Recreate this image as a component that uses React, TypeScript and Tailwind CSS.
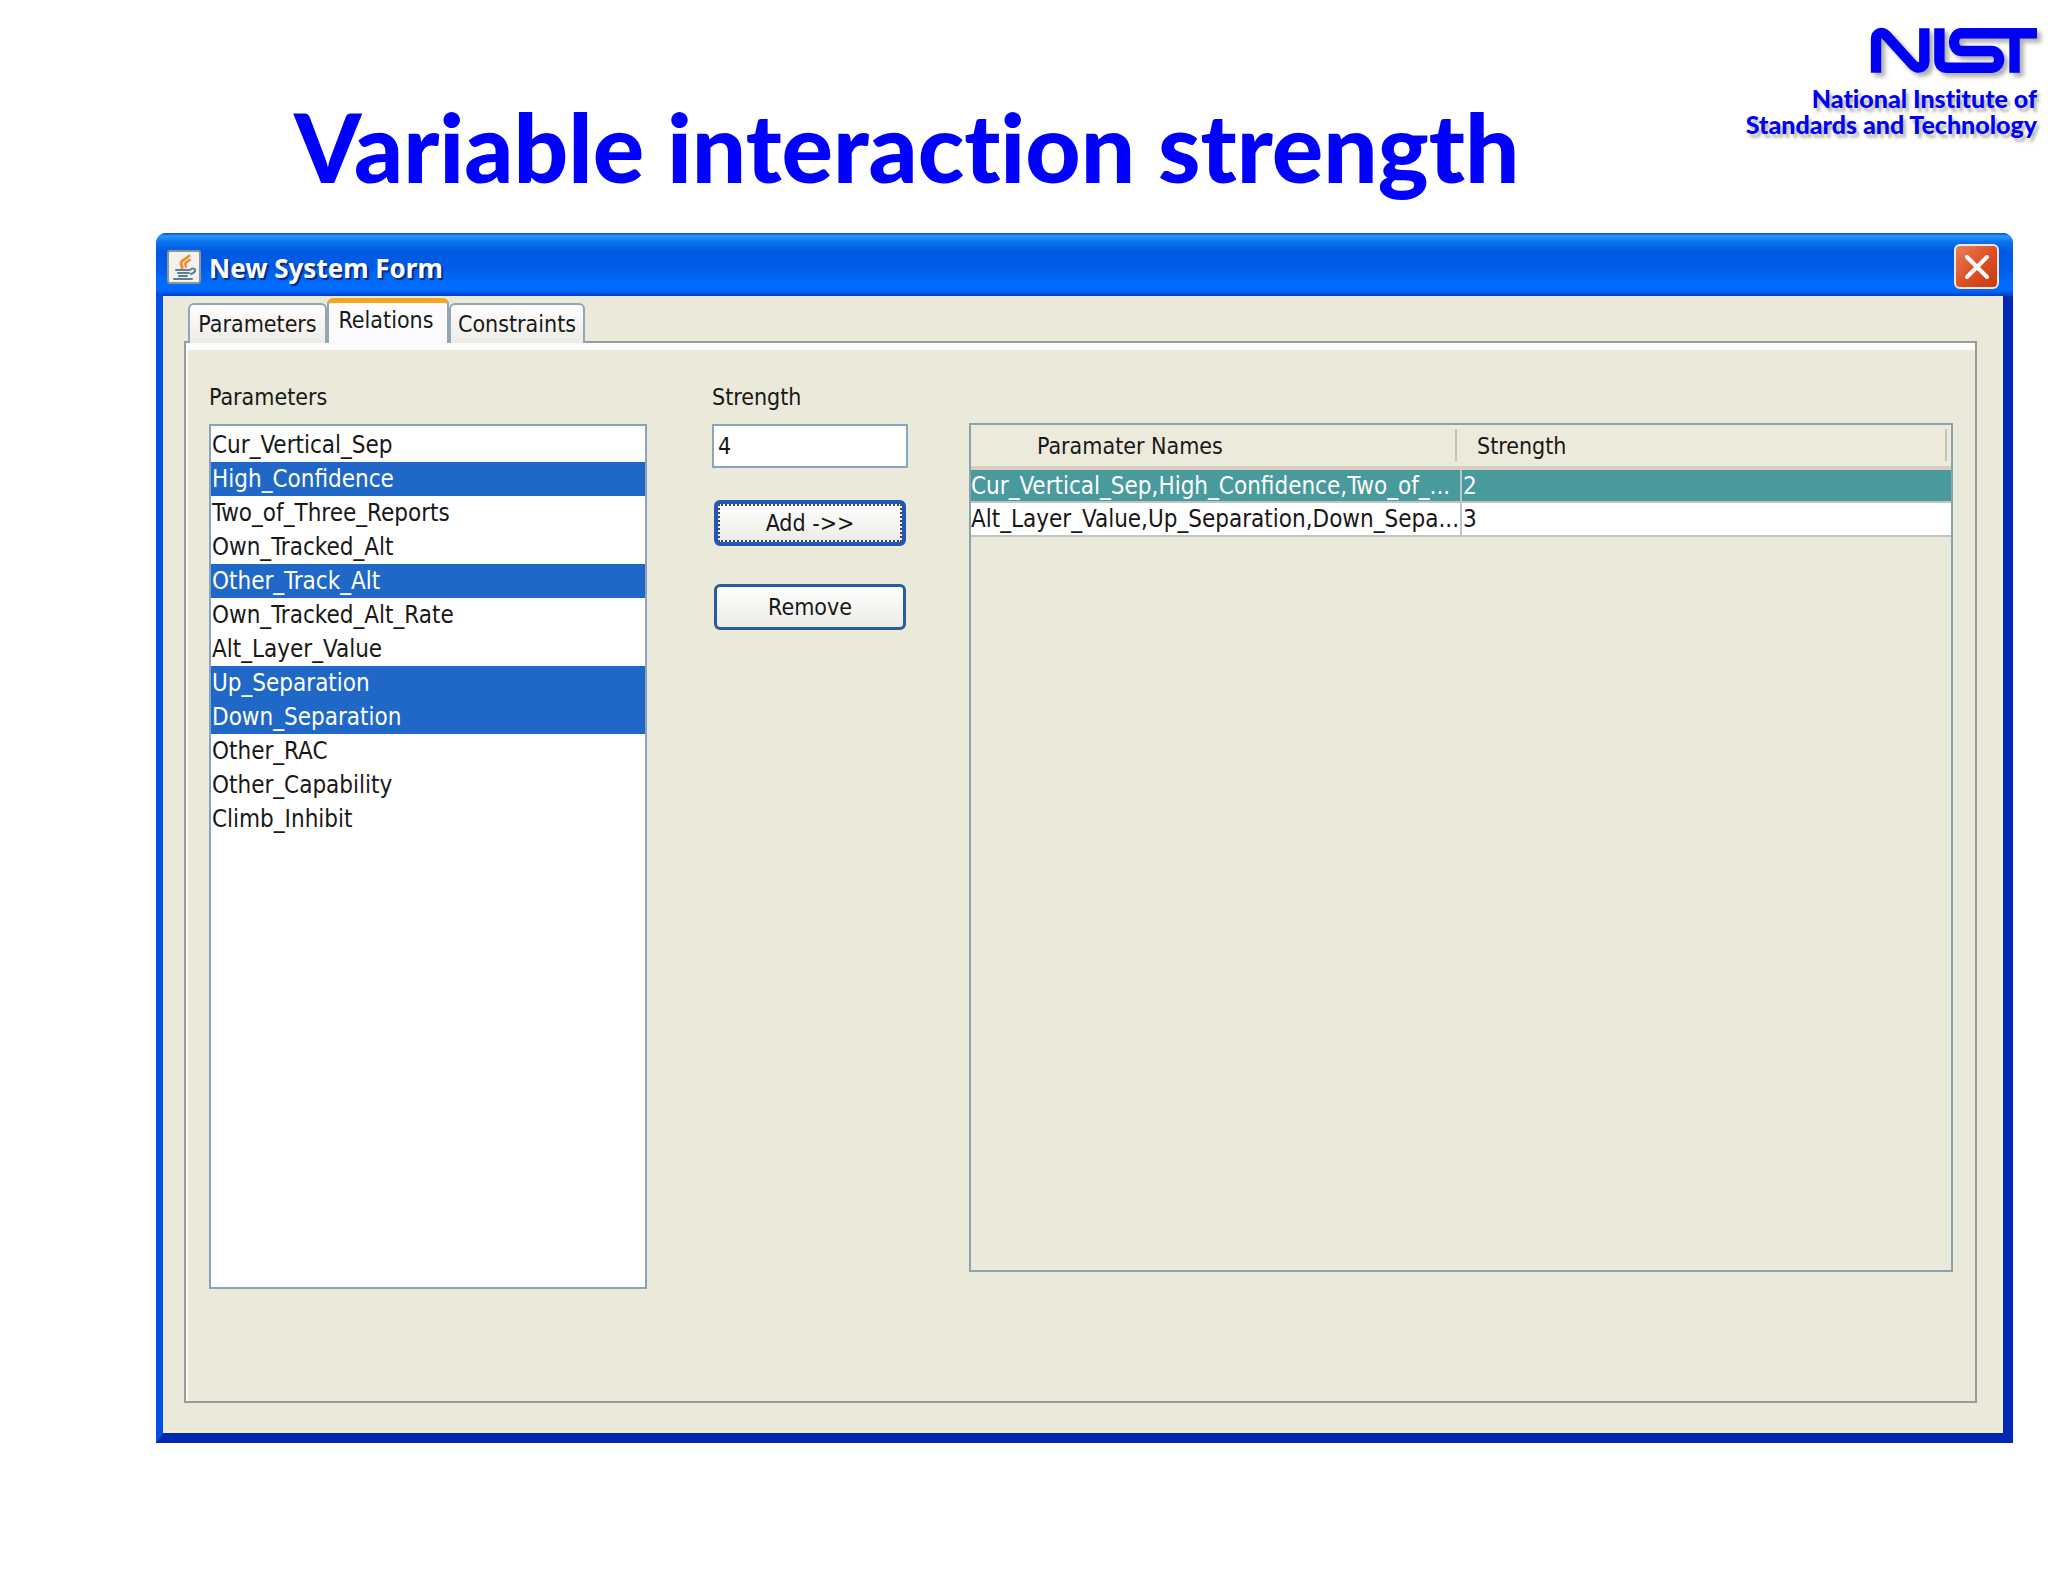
import { useState } from "react";

const parameters = [
  "Cur_Vertical_Sep",
  "High_Confidence",
  "Two_of_Three_Reports",
  "Own_Tracked_Alt",
  "Other_Track_Alt",
  "Own_Tracked_Alt_Rate",
  "Alt_Layer_Value",
  "Up_Separation",
  "Down_Separation",
  "Other_RAC",
  "Other_Capability",
  "Climb_Inhibit",
];

const relations = [
  { names: "Cur_Vertical_Sep,High_Confidence,Two_of_...", strength: 2 },
  { names: "Alt_Layer_Value,Up_Separation,Down_Sepa...", strength: 3 },
];

function NistLogo() {
  return (
    <div className="mr-[11px] flex flex-col items-end pt-7 font-['Lato',sans-serif] text-[25px] leading-[26px] font-black whitespace-nowrap text-[#0000f5] [font-variant-ligatures:none] [text-shadow:3px_4px_3px_#b8b8b8]">
      <svg
        role="img"
        aria-label="NIST"
        viewBox="0 0 495 133"
        className="mb-3 h-[45px] w-[166px] overflow-visible drop-shadow-[4px_4px_2px_#b0b0b0]"
        fill="none"
        stroke="#0000f5"
        strokeWidth="31"
      >
        <path d="M15 133V34C15 14 32 9 45 21L124 108C138 123 159 119 159 98V0" />
        <path d="M204 0V94Q204 118 228 118H358C390 118 390 68 358 68H270C240 68 240 15 270 15H495" />
        <path d="M428 15V133" />
      </svg>
      <span>National Institute of</span>
      <span>Standards and Technology</span>
    </div>
  );
}

function JavaIcon() {
  return (
    <svg viewBox="0 0 34 34" className="size-[34px]" aria-hidden="true">
      <rect x="1" y="1" width="32" height="32" rx="2" fill="#f1f1ee" stroke="#8c9696" strokeWidth="2" />
      <g fill="none" strokeLinecap="round">
        <path d="M22 6C20 9 13 10 14 14C14 16 16 16 15 18" stroke="#f08a24" strokeWidth="2.8" />
        <path d="M23 10C19 12 17 13 19 17" stroke="#f08a24" strokeWidth="2.2" />
        <path d="M9 20H23M11 23H22M12 26H20M7 29H25" stroke="#5b7f96" strokeWidth="2" />
        <path d="M24 19C29 17 30 22 24 24" stroke="#5b7f96" strokeWidth="2" />
      </g>
    </svg>
  );
}

function TitleBar() {
  return (
    <div className="flex h-[63px] items-center rounded-t-[10px] bg-[linear-gradient(#0a4fd8_0%,#2a94ff_5%,#0a74f0_14%,#0058e0_30%,#005ce8_55%,#006cff_80%,#006cff_90%,#0040c8_100%)] pt-1 pr-[14px] pl-[11px]">
      <JavaIcon />
      <h2 className="ml-2 pt-[2px] font-['Noto_Sans',sans-serif] text-[26px] leading-8 font-bold text-white [text-shadow:2px_2px_1px_#0a2a80]">
        New System Form
      </h2>
      <button
        type="button"
        aria-label="Close"
        className="ml-auto flex size-[45px] items-center justify-center rounded-md border-2 border-[#f4e4e4] bg-linear-to-br from-[#e8805c] via-[#de5024] to-[#c83c10]"
      >
        <svg viewBox="0 0 24 24" className="size-6" stroke="#fff" strokeWidth="4" strokeLinecap="round">
          <path d="M2 2L22 22M22 2L2 22" />
        </svg>
      </button>
    </div>
  );
}

function Tabs() {
  const idle =
    "h-10 rounded-t-md border-2 border-b-0 border-[#91a7b4] bg-linear-to-b from-white to-[#ecebe6]";
  return (
    <div role="tablist" className="relative z-10 -mb-[2px] ml-1 flex items-end">
      <button type="button" role="tab" aria-selected="false" className={`${idle} w-[139px]`}>
        Parameters
      </button>
      <button
        type="button"
        role="tab"
        aria-selected="true"
        className="h-[45px] w-[122px] rounded-t-md border-x-2 border-t-[5px] border-x-[#91a7b4] border-t-[#f5a623] bg-[#fcfcfe] pr-1 pb-[6px]"
      >
        Relations
      </button>
      <button type="button" role="tab" aria-selected="false" className={`${idle} w-[136px]`}>
        Constraints
      </button>
    </div>
  );
}

function RelationsTable() {
  return (
    <div className="mt-10 ml-[61px] h-[849px] flex-1 border-2 border-[#8aa3b0]">
      <table className="w-full table-fixed border-collapse text-left">
        <thead>
          <tr className="h-[43px] border-b-4 border-[#d9cfc0] bg-[#ebeadb]">
            <th className="relative w-1/2 pl-[66px] font-normal">
              Paramater Names
              <span className="absolute top-1 right-1 h-8 w-[2px] bg-[#c7c5b2]" />
            </th>
            <th className="relative pl-4 font-normal">
              Strength
              <span className="absolute top-1 right-1 h-8 w-[2px] bg-[#c7c5b2]" />
            </th>
          </tr>
        </thead>
        <tbody className="text-[24px]">
          {relations.map((row, i) => (
            <tr
              key={row.names}
              aria-selected={i === 0}
              className="h-[34px] border-b-2 border-[#c0c4c4] bg-white aria-selected:bg-[#489a9c] aria-selected:text-white"
            >
              <td className="overflow-hidden border-r-2 border-[#c0c4c4] whitespace-nowrap">{row.names}</td>
              <td className="pl-px">{row.strength}</td>
            </tr>
          ))}
        </tbody>
      </table>
    </div>
  );
}

export default function App() {
  const [selected, setSelected] = useState([
    "High_Confidence",
    "Other_Track_Alt",
    "Up_Separation",
    "Down_Separation",
  ]);
  const [strength, setStrength] = useState("4");

  return (
    <main className="min-h-screen bg-white pb-[139px]">
      <header className="flex h-[233px] items-start justify-between">
        <h1 className="pt-[90px] pl-[294px] font-['Lato',sans-serif] text-[96px] leading-[112px] font-black whitespace-nowrap text-[#0000ff] [font-variant-ligatures:none]">
          Variable interaction strength
        </h1>
        <NistLogo />
      </header>

      <section className="mr-[35px] ml-[156px] rounded-t-[10px] bg-[#0040d8] font-['DejaVu_Sans_Condensed','DejaVu_Sans',sans-serif] text-[23px] leading-7 text-[#181818]">
        <TitleBar />
        <div className="border-r-[10px] border-b-[10px] border-l-[7px] border-t-0 border-l-[#0050e8] border-r-[#0028b4] border-b-[#0028b4] bg-[#ebe9da] pt-[2px] pr-[26px] pb-[30px] pl-[21px] shadow-[inset_-2px_-2px_0_#f4f0d8]">
          <Tabs />
          <div className="flex items-start border-2 border-[#9a9a98] bg-[#ebe9da] pt-10 pr-[22px] pb-28 pl-[23px] shadow-[inset_2px_7px_0_#fcfcfc]">
            <div className="flex w-[438px] flex-col">
              <label htmlFor="parameters" className="mb-[13px]">
                Parameters
              </label>
              <select
                id="parameters"
                multiple
                value={selected}
                onChange={(e) => setSelected(Array.from(e.target.selectedOptions, (o) => o.value))}
                className="h-[865px] overflow-hidden border-2 border-[#86a3c0] bg-white py-[2px] text-[24px] outline-none"
              >
                {parameters.map((name) => (
                  <option
                    key={name}
                    value={name}
                    className="h-[34px] px-px pt-[3px] pb-0 checked:bg-[linear-gradient(#2068c8,#2068c8)] checked:[-webkit-text-fill-color:white]"
                  >
                    {name}
                  </option>
                ))}
              </select>
            </div>

            <div className="ml-[65px] flex w-[196px] flex-col">
              <label htmlFor="strength" className="mb-[13px]">
                Strength
              </label>
              <input
                id="strength"
                value={strength}
                onChange={(e) => setStrength(e.target.value)}
                className="h-11 border-2 border-[#86a3c8] bg-white px-1 outline-none"
              />
              <button
                type="button"
                className="mx-[2px] mt-8 h-[46px] rounded-md border-4 border-[#2458b8] bg-linear-to-b from-white to-[#ecebe6] outline-2 -outline-offset-6 outline-dotted outline-[#404850]"
              >
                Add -&gt;&gt;
              </button>
              <button
                type="button"
                className="mx-[2px] mt-[38px] h-[46px] rounded-md border-[3px] border-[#285ca0] bg-linear-to-b from-white to-[#ecebe6]"
              >
                Remove
              </button>
            </div>

            <RelationsTable />
          </div>
        </div>
      </section>
    </main>
  );
}
